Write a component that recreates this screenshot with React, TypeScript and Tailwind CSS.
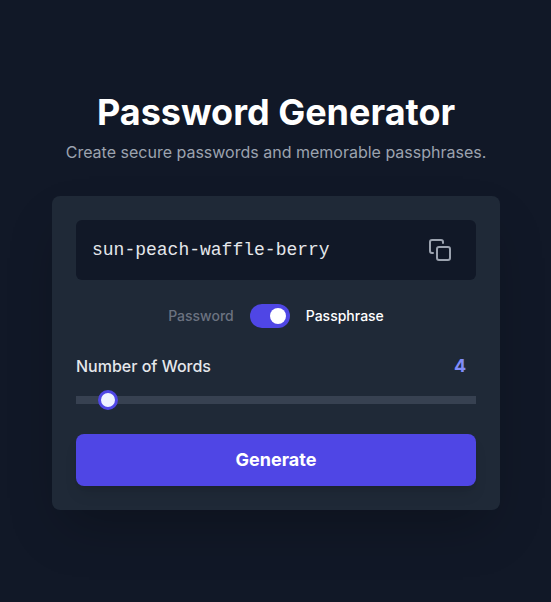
import React, { useState } from "react";

const words = ["sun", "peach", "waffle", "berry"];

export default function App() {
  const [count, setCount] = useState(4);
  const [passphrase, setPassphrase] = useState(true);

  return (
    <main className="flex min-h-screen flex-col items-center justify-center bg-[#111827] py-4 pr-4 pl-[17px] font-['Inter',sans-serif] text-white">
      <div className="w-full max-w-md">
        <header className="mb-8 text-center">
          <h1 className="text-4xl font-bold text-white">Password Generator</h1>
          <p className="mt-2 text-[#9ca3af]">Create secure passwords and memorable passphrases.</p>
        </header>
        <section className="rounded-lg bg-[#1f2937] p-6 shadow-2xl">
          <div className="mb-6 flex h-15 items-center justify-between rounded-md bg-[#111827] px-4">
            <span className="font-['Liberation_Mono',monospace] text-lg text-[#e5e7eb]">{words.join("-")}</span>
            <button className="p-2 text-[#9ca3af]" aria-label="Copy">
              <svg className="size-6" viewBox="0 0 24 24" fill="none" stroke="currentColor" strokeWidth="2" strokeLinecap="round" strokeLinejoin="round">
                <rect x="9" y="9" width="13" height="13" rx="2" />
                <path d="M5 15H4a2 2 0 0 1-2-2V4a2 2 0 0 1 2-2h9a2 2 0 0 1 2 2v1" />
              </svg>
            </button>
          </div>
          <div className="mb-6 flex items-center justify-center gap-4 text-sm font-medium">
            <span className={passphrase ? "text-[#6b7280]" : "text-white"}>Password</span>
            <button
              role="switch"
              aria-checked={passphrase}
              aria-label="Passphrase mode"
              onClick={() => setPassphrase(!passphrase)}
              className={`flex h-6 w-10 items-center rounded-full bg-[#4f46e5] px-1 ${passphrase ? "justify-end" : "justify-start"}`}
            >
              <span className="size-4 rounded-full bg-white" />
            </button>
            <span className={passphrase ? "text-white" : "text-[#6b7280]"}>Passphrase</span>
          </div>
          <div className="mb-[30px]">
            <div className="flex h-7 items-center justify-between">
              <label htmlFor="count" className="font-medium text-[#e5e7eb]">Number of Words</label>
              <span className="w-8 text-center text-lg font-bold text-[#818cf8]">{count}</span>
            </div>
            <input
              id="count"
              type="range"
              min={3}
              max={20}
              value={count}
              onChange={(e) => setCount(Number(e.target.value))}
              className="mt-4 block h-2 w-full appearance-none bg-[#374151] [&::-webkit-slider-thumb]:size-5 [&::-webkit-slider-thumb]:appearance-none [&::-webkit-slider-thumb]:rounded-full [&::-webkit-slider-thumb]:border-3 [&::-webkit-slider-thumb]:border-[#4f46e5] [&::-webkit-slider-thumb]:bg-[#eef2ff]"
            />
          </div>
          <button className="h-13 w-full rounded-lg bg-[#4f46e5] text-lg font-bold text-white shadow-lg">Generate</button>
        </section>
      </div>
    </main>
  );
}
